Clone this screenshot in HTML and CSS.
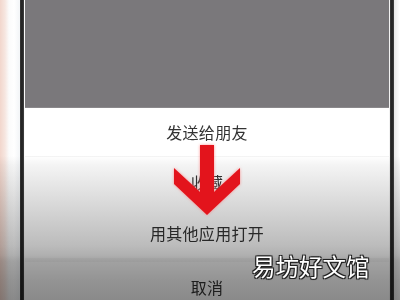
FILE: index.html
```html
<!DOCTYPE html>
<html lang="zh">
<head>
<meta charset="utf-8">
<link rel="stylesheet" href="styles.css">
</head>
<body>
<div class="frame">
  <div class="bezel-left"></div>
  <div class="edge"></div>
  <div class="screen">
    <div class="dim"></div>
    <div class="sheet">
      <div class="item item-first">发送给朋友</div>
      <div class="item item-second">收藏</div>
      <div class="item item-third">用其他应用打开</div>
      <div class="gap"></div>
      <div class="item item-cancel">取消</div>
    </div>
  </div>
  <div class="edge"></div>
  <div class="bezel-right"></div>
  <div class="shade"></div>
  <svg class="arrow" width="70" height="75" viewBox="0 0 70 75">
    <polygon points="26,0 40,0 40,47 66,23 66,39 33,70 0,39 0,23 26,47" fill="#e3141c"/>
  </svg>
  <div class="watermark">易坊好文馆</div>
</div>
</body>
</html>
```
FILE: styles.css
```css
html, body {
  margin: 0;
  padding: 0;
}
body {
  width: 400px;
  height: 300px;
  overflow: hidden;
  font-family: "Noto Sans CJK SC", "Noto Sans", sans-serif;
}
.frame {
  position: relative;
  display: flex;
  width: 400px;
  height: 300px;
  background: #fff;
}
.bezel-left {
  width: 20px;
  flex-shrink: 0;
  background: linear-gradient(90deg, #f2d6cc 0px, #f6e6e0 5px, #fbfbfb 9px, #ffffff 14px, #f4f6f8 19px);
}
.edge {
  width: 4px;
  flex-shrink: 0;
  background: linear-gradient(90deg, #3a3a3a, #1e1e1e 50%, #444);
}
.bezel-right {
  width: 6px;
  flex-shrink: 0;
  background: linear-gradient(90deg, #e8e8e8, #ffffff);
}
.screen {
  flex: 1;
  display: flex;
  flex-direction: column;
  overflow: hidden;
  border-left: 1px solid #fafafa;
  border-right: 1px solid #f2f2f2;
}
.dim {
  height: 107px;
  flex-shrink: 0;
  background: #7a787b;
  border-bottom: 1px solid #8a888b;
}
.sheet {
  flex: 1;
  display: flex;
  flex-direction: column;
  background: #ffffff;
}
.item {
  display: flex;
  flex-shrink: 0;
  align-items: center;
  justify-content: center;
  font-size: 16px;
  color: #333333;
  letter-spacing: 0.3px;
}
.item-first {
  height: 48px;
  border-bottom: 1px solid #f4f4f4;
}
.item-second {
  height: 50px;
}
.item-third {
  height: 51px;
}
.gap {
  height: 4px;
  flex-shrink: 0;
  background: #f8f8f8;
}
.item-cancel {
  height: 50px;
}
.shade {
  position: absolute;
  left: 0;
  top: 0;
  width: 400px;
  height: 300px;
  pointer-events: none;
  mix-blend-mode: multiply;
  background: linear-gradient(180deg, #ffffff 0px, #ffffff 156px, #f4f4f4 165px, #d8d8d8 205px, #bcbcbc 245px, #b0b0b0 255px, #a2a2a2 261px, #949494 280px, #8a8a8a 300px);
}
.arrow {
  position: absolute;
  left: 174px;
  top: 145px;
  filter: drop-shadow(0 0 1.5px rgba(255, 120, 120, 0.8));
}
.watermark {
  position: absolute;
  left: 252px;
  top: 251px;
  font-size: 23.5px;
  line-height: 30px;
  color: #ffffff;
  letter-spacing: 0;
  text-shadow: -1px -1px 0 #222, 1px -1px 0 #222, -1px 1px 0 #222, 1px 1px 0 #222, 0 0 2px #000;
}
```
